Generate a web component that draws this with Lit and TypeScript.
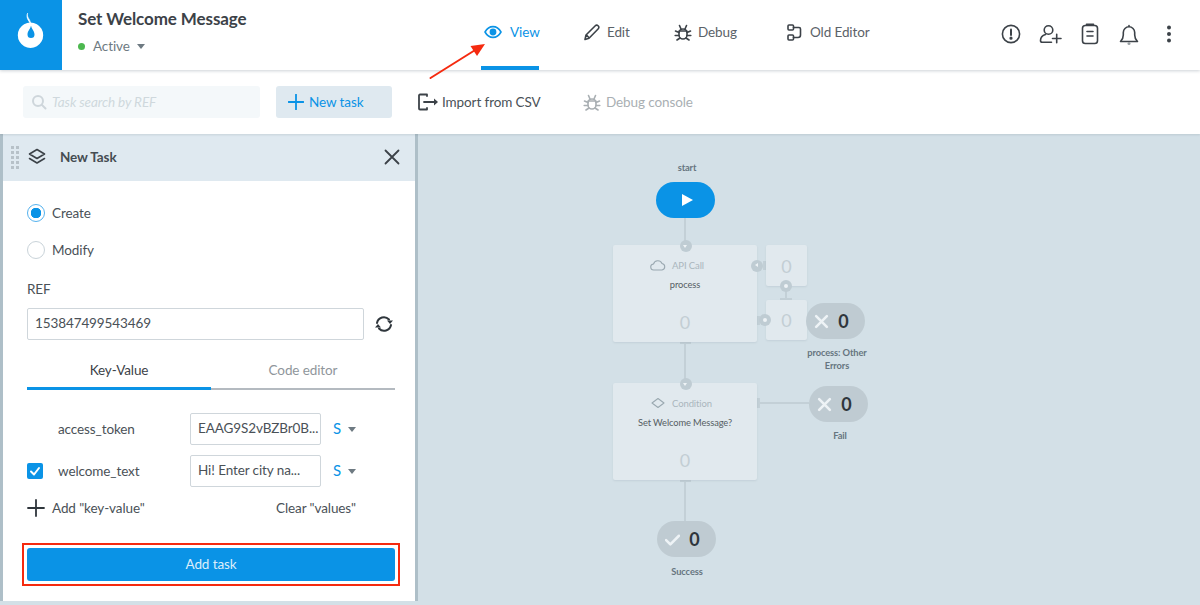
import { LitElement, html, css, svg } from "lit";
import { customElement } from "lit/decorators.js";

const ORIGIN_X = 418;
const ORIGIN_Y = 134;

const place = (x: number, y: number, w?: number, h?: number) =>
  `left:${x - ORIGIN_X}px;top:${y - ORIGIN_Y}px;` +
  (w !== undefined ? `width:${w}px;` : "") +
  (h !== undefined ? `height:${h}px;` : "");

const bug = svg`<path d="M5 10a4 4 0 0 1 8 0v2a4 4 0 0 1-8 0Z" /><path d="M5.200 8h7.600M5.500 2.500 7 6M12.500 2.500 11 6M5 9.500 1.500 8M13 9.500l3.500-1.500M5 12.500H1.200M13 12.500h3.800M6 15l-3 2M12 15l3 2" />`;

const icons = {
  eye: svg`<path d="M1 9c2-3.600 5-5.400 8-5.400s6 1.800 8 5.400c-2 3.600-5 5.400-8 5.400S3 12.600 1 9Z" /><circle cx="9" cy="9" r="2.600" fill="currentColor" />`,
  pencil: svg`<path d="M2 16.500 3 12 12.300 2.700a1.900 1.900 0 0 1 2.700 0l.3.300a1.900 1.900 0 0 1 0 2.700L6 15.200 2 16.500ZM3.500 12 6 14.800" />`,
  bug,
  editor: svg`<rect x="2" y="2" width="5.500" height="5" rx="1" /><rect x="2" y="12" width="5.500" height="5" rx="1" /><path d="M7.500 4.500H13a1.500 1.500 0 0 1 1.500 1.500v6a2.500 2.500 0 0 1-2.500 2.500H7.500" />`,
};

const topIcons = [
  svg`<circle cx="12" cy="12" r="8.600" /><path d="M12 7.500v5.500" stroke-width="2" /><circle cx="12" cy="16.200" r=".8" fill="currentColor" />`,
  svg`<circle cx="10.500" cy="8" r="4.300" /><path d="M7.500 12.500c-2.700.8-5 2.700-5 6 0 1 .8 1.800 1.800 1.800h9.200M14.500 16.500H23M18.700 12.300v8.400" />`,
  svg`<rect x="4.500" y="3.500" width="15" height="18" rx="2.800" /><path d="M8.500 2.400h7M9 9.500h6M9 14h6" />`,
  svg`<path d="M3.500 19.500c1.800-1.700 2.800-3 2.800-6.500v-2.500a5.700 5.700 0 0 1 11.400 0V13c0 3.500 1 4.800 2.800 6.500H3.500ZM12 4.800V3.500" /><circle cx="12" cy="21.600" r="1.500" fill="#9aa0a5" stroke="none" />`,
  svg`<circle cx="12" cy="5.500" r="2" fill="currentColor" stroke="none" /><circle cx="12" cy="12" r="2" fill="currentColor" stroke="none" /><circle cx="12" cy="18.500" r="2" fill="currentColor" stroke="none" />`,
];

@customElement("app-root")
export class AppRoot extends LitElement {
  static styles = css`
    * {
      box-sizing: border-box;
    }

    :host {
      display: block;
      width: 1200px;
      height: 605px;
      overflow: hidden;
      position: relative;
      background: #d3e0e7;
      font-family: "Lato", "Open Sans", sans-serif;
      font-size: 13.500px;
      letter-spacing: -0.1px;
      color: #4a5157;
    }

    svg {
      display: block;
      fill: none;
      stroke: currentColor;
      stroke-width: 1.600;
      stroke-linecap: round;
      stroke-linejoin: round;
      flex: none;
    }

    .header {
      display: flex;
      height: 70px;
      background: #fff;
      box-shadow: 0 1px 3px rgba(60, 80, 95, 0.25);
      position: relative;
      z-index: 2;
    }

    .logo {
      width: 62px;
      background: #0a93e6;
      flex: none;
    }

    .logo svg {
      stroke: #fff;
      fill: #fff;
      stroke-width: 0;
    }

    .title-block {
      width: 403px;
      margin-left: 16px;
      flex: none;
    }

    .title {
      margin-top: 9px;
      font-size: 17px;
      line-height: 19px;
      font-weight: 700;
      color: #3c4248;
    }

    .status {
      display: flex;
      align-items: center;
      margin-top: 10px;
      line-height: 16px;
      color: #6e7a82;
    }

    .dot {
      width: 7px;
      height: 7px;
      border-radius: 50%;
      background: #4cb84f;
      margin-right: 8px;
    }

    .caret {
      width: 0;
      height: 0;
      border-left: 4.500px solid transparent;
      border-right: 4.500px solid transparent;
      border-top: 5px solid #6e7a82;
      flex: none;
    }

    .status .caret {
      margin-left: 7px;
    }

    .tabs {
      display: grid;
      grid-template-columns: 58px 47px 63px 83px;
      column-gap: 44px;
      width: 480px;
      flex: none;
    }

    .tab {
      display: flex;
      align-items: center;
      gap: 6px;
      height: 70px;
      padding: 0 0 6px 0;
      white-space: nowrap;
      color: #5b6268;
    }

    .tab svg {
      color: #3c4248;
    }

    .tab.active {
      gap: 8px;
      color: #0a93e6;
      border-bottom: 4px solid #0a93e6;
      padding: 0 0 2px 3px;
    }

    .tab.active svg {
      color: #0a93e6;
    }

    .tab.old {
      margin-left: 5px;
    }

    .actions {
      display: flex;
      margin-left: 30px;
      padding-bottom: 2px;
    }

    .action {
      width: 39.500px;
      display: flex;
      align-items: center;
      justify-content: center;
      color: #3c4248;
    }

    .toolbar {
      display: flex;
      align-items: center;
      height: 64px;
      padding-left: 23px;
      background: #fff;
      position: relative;
      z-index: 1;
      box-shadow: 0 1px 2px rgba(60, 80, 95, 0.15);
    }

    .search {
      display: flex;
      align-items: center;
      gap: 5px;
      width: 237px;
      height: 32px;
      padding-left: 8px;
      border-radius: 3px;
      background: #f4f8fa;
      color: #cfd8dd;
      font-style: italic;
    }

    .new-task {
      display: flex;
      align-items: center;
      gap: 5px;
      width: 116px;
      height: 32px;
      margin-left: 16px;
      padding-left: 12px;
      border-radius: 3px;
      background: #dfe9f0;
      color: #0a93e6;
    }

    .tool {
      display: flex;
      align-items: center;
      white-space: nowrap;
      gap: 4px;
      color: #4a5157;
    }

    .tool.import {
      width: 165px;
      margin-left: 26px;
    }

    .tool.debug {
      gap: 5px;
      color: #a9afb3;
    }

    .main {
      display: flex;
      height: 471px;
    }

    .panel {
      width: 418px;
      height: 467px;
      flex: none;
      border-left: 3px solid #aebfc8;
      border-right: 3px solid #aebfc8;
      background: #fff;
      box-shadow: 0 4px 0 #d3e0e7;
    }

    .panel-head {
      display: flex;
      align-items: center;
      height: 47px;
      padding: 0 15px 1px 8px;
      background: #dfe9f0;
      font-weight: 700;
      color: #454c52;
    }

    .grip {
      display: grid;
      grid-template-columns: 3px 3px;
      gap: 2px 2px;
      width: 8px;
      margin-right: 9px;
    }

    .grip i {
      width: 3px;
      height: 3px;
      background: #b7c1c8;
    }

    .panel-head .name {
      margin-left: 14px;
      flex: 1;
    }

    .panel-body {
      padding: 0 20px 0 24px;
    }

    .radio {
      display: flex;
      align-items: center;
      gap: 7px;
      height: 18px;
    }

    .radio.first {
      margin-top: 23px;
    }

    .radio.second {
      margin-top: 19px;
    }

    .radio i {
      width: 18px;
      height: 18px;
      border-radius: 50%;
      border: 1px solid #c9d3d9;
      flex: none;
    }

    .radio.on i {
      border-color: #55b2ee;
      background: radial-gradient(circle, #0a93e6 0 5px, #fff 5.500px);
    }

    .ref-label {
      margin-top: 22px;
      line-height: 17px;
    }

    .ref {
      display: flex;
      align-items: center;
      margin-top: 10px;
    }

    .field {
      height: 32px;
      line-height: 28px;
      padding: 0 3px 0 7px;
      border: 1px solid #cfd6db;
      border-radius: 2px;
      background: #fff;
      white-space: nowrap;
      overflow: hidden;
      color: #4a5157;
    }

    .ref .field {
      width: 337px;
    }

    .ref svg {
      margin-left: 10px;
    }

    .kv-tabs {
      display: grid;
      grid-template-columns: 184px 184px;
      margin-top: 20px;
      text-align: center;
    }

    .kv-tab {
      height: 30px;
      line-height: 20px;
      border-bottom: 2px solid #b4bac0;
      color: #8f969b;
    }

    .kv-tab.active {
      border-bottom: 3px solid #0a93e6;
      color: #3c4248;
    }

    .kv-row {
      display: flex;
      align-items: center;
      height: 32px;
    }

    .kv-row.one {
      margin-top: 23px;
    }

    .kv-row.two {
      margin-top: 10px;
    }

    .check {
      width: 31px;
      flex: none;
    }

    .check i {
      display: flex;
      align-items: center;
      justify-content: center;
      width: 16px;
      height: 16px;
      border-radius: 2px;
      background: #0a93e6;
      color: #fff;
    }

    .kv-row .key {
      width: 132px;
      flex: none;
    }

    .kv-row .field {
      width: 131px;
      flex: none;
    }

    .type {
      margin-left: 12px;
      width: 15px;
      font-size: 15px;
      line-height: 15px;
      padding-bottom: 2px;
      color: #0a93e6;
    }

    .add-row {
      display: flex;
      align-items: center;
      margin-top: 12px;
      height: 18px;
      color: #4a5157;
      white-space: nowrap;
    }

    .add-row svg {
      margin-right: 7px;
    }

    .add-row .clear {
      margin-left: auto;
      margin-right: 39px;
    }

    .add-box {
      margin: 26px -5px 0 -5px;
      border: 2px solid #f52a0f;
      padding: 3px;
      height: 43px;
    }

    .add-btn {
      height: 33px;
      line-height: 33px;
      text-align: center;
      border-radius: 3px;
      background: #0a93e6;
      color: #dceefb;
    }

    .canvas {
      position: relative;
      flex: 1;
      background: #d3e0e7;
    }

    .line,
    .node,
    .pill,
    .label,
    .knob {
      position: absolute;
    }

    .line {
      background: #c3d0d7;
    }

    .node {
      background: #e1e9ee;
      border-radius: 2px;
      box-shadow: 0 1px 2px rgba(80, 100, 115, 0.12);
      text-align: center;
      color: #c3ced4;
      font-size: 18px;
    }

    .node .kind {
      display: flex;
      align-items: center;
      gap: 6px;
      margin-top: 12px;
      padding-left: 37px;
      height: 16px;
      font-size: 9.500px;
      color: #aab6bd;
    }

    .node .kind svg {
      color: #9aa8b0;
      stroke-width: 1.100;
    }

    .node .text {
      margin-top: 4px;
      height: 16px;
      line-height: 16px;
      font-size: 9.300px;
      color: #555d63;
    }

    .node .count {
      margin-top: 17px;
      line-height: 24px;
    }

    .node.small {
      display: flex;
      align-items: center;
      justify-content: center;
    }

    .knob {
      width: 12px;
      height: 12px;
      border-radius: 50%;
      background: #bfccd3;
    }

    .knob::after {
      content: "";
      position: absolute;
      left: 4px;
      top: 4px;
      width: 4px;
      height: 4px;
      border-radius: 50%;
      background: #eef3f6;
    }

    .knob.down::after {
      top: 5px;
      left: 3.500px;
      width: 0;
      height: 0;
      border-radius: 0;
      background: none;
      border-left: 2.500px solid transparent;
      border-right: 2.500px solid transparent;
      border-top: 3px solid #eef3f6;
    }

    .knob.left::after {
      top: 3.500px;
      left: 4px;
      width: 0;
      height: 0;
      border-radius: 0;
      background: none;
      border-top: 2.500px solid transparent;
      border-bottom: 2.500px solid transparent;
      border-right: 3px solid #eef3f6;
    }

    .pill {
      display: flex;
      align-items: center;
      justify-content: center;
      gap: 9px;
      width: 59px;
      height: 36px;
      padding-right: 8px;
      border-radius: 18px;
      background: #bfcbd2;
      color: #2f363c;
      font-size: 18px;
      font-weight: 700;
    }

    .pill svg {
      color: #eef3f6;
      stroke-width: 2.400;
    }

    .pill.start {
      padding: 0 0 0 3px;
      background: #0a93e6;
    }

    .pill.start svg {
      fill: #fff;
      stroke: none;
    }

    .label {
      width: 80px;
      text-align: center;
      font-size: 9.300px;
      line-height: 13px;
      font-weight: 700;
      color: #66757f;
    }

    .arrow {
      position: absolute;
      left: 425px;
      top: 40px;
      z-index: 3;
      stroke: #f52a0f;
    }
  `;

  private tab(name: string, icon: unknown, cls = "") {
    return html`<div class="tab ${cls}">
      <svg width="18" height="18" viewBox="0 0 18 18">${icon}</svg>${name}
    </div>`;
  }

  private node(x: number, y: number, kind: unknown, label: string, text: string) {
    return html`<div class="node" style=${place(x, y, 144, 97)}>
      <div class="kind">
        <svg width="16" height="14" viewBox="0 0 16 14">${kind}</svg>${label}
      </div>
      <div class="text">${text}</div>
      <div class="count">0</div>
    </div>`;
  }

  private pill(x: number, y: number, icon: unknown) {
    return html`<div class="pill" style=${place(x, y)}>
      <svg width="15" height="15" viewBox="0 0 14 14">${icon}</svg>0
    </div>`;
  }

  private label(cx: number, y: number, text: unknown) {
    return html`<div class="label" style=${place(cx - 40, y)}>${text}</div>`;
  }

  private knob(cx: number, cy: number, cls = "") {
    return html`<div class="knob ${cls}" style=${place(cx - 6, cy - 6)}></div>`;
  }

  private line(x: number, y: number, w: number, h: number) {
    return html`<div class="line" style=${place(x, y, w, h)}></div>`;
  }

  render() {
    const cross = svg`<path d="M2 2l10 10M12 2 2 12" />`;
    const check = svg`<path d="M1 7.500 5 11.500 13 3.500" />`;
    const cloud = svg`<path d="M4 12a3 3 0 0 1-.5-6 4.500 4.500 0 0 1 8.500-.5 3.300 3.300 0 0 1 0 6.500H4Z" />`;
    const diamond = svg`<path d="M8 2.500 14 7 8 11.500 2 7Z" />`;

    return html`
      <div class="header">
        <div class="logo">
          <svg width="62" height="70" viewBox="0 0 62 70">
            <path
              fill-rule="evenodd"
              d="M30.500 22.500a12.700 12.700 0 1 1-.01 0ZM31 25.500c-.6 3.500-3.500 5.500-3.500 9a3.500 3.500 0 0 0 7 0c0-3.500-2.900-5.500-3.500-9Z"
            />
            <path
              d="M27.500 13.500c-1.500 4 3.600 5.500 3.500 12.500-.8-5-5.800-7-3.500-12.500Z"
              stroke-width=".6"
            />
          </svg>
        </div>
        <div class="title-block">
          <div class="title">Set Welcome Message</div>
          <div class="status">
            <span class="dot"></span>Active<span class="caret"></span>
          </div>
        </div>
        <div class="tabs">
          ${this.tab("View", icons.eye, "active")}
          ${this.tab("Edit", icons.pencil)}
          ${this.tab("Debug", icons.bug)}
          ${this.tab("Old Editor", icons.editor, "old")}
        </div>
        <div class="actions">
          ${topIcons.map(
            (icon) => html`<div class="action">
              <svg width="24" height="24" viewBox="0 0 24 24">${icon}</svg>
            </div>`
          )}
        </div>
      </div>

      <svg class="arrow" width="66" height="44" viewBox="425 40 66 44">
        <path d="M430.500 78 476 49.500" stroke-width="2" />
        <path d="M485 44 470.500 46 477 56Z" fill="#f52a0f" stroke="none" />
      </svg>

      <div class="toolbar">
        <div class="search">
          <svg width="16" height="16" viewBox="0 0 16 16" style="color:#ced6db">
            <circle cx="7" cy="7" r="5" stroke-width="2" />
            <path d="m11 11 3.500 3.500" stroke-width="2" />
          </svg>
          Task search by REF
        </div>
        <div class="new-task">
          <svg width="16" height="16" viewBox="0 0 16 16">
            <path d="M8 .5v15M.5 8h15" stroke-width="1.800" />
          </svg>
          New task
        </div>
        <div class="tool import">
          <svg width="20" height="18" viewBox="0 0 20 18" style="color:#3c4248">
            <path d="M9 3V1.500H2A1 1 0 0 0 1 2.500v13a1 1 0 0 0 1 1h7V15M6 9h11" stroke-width="1.800" />
            <path d="M16 5.500 20 9l-4 3.500Z" fill="currentColor" stroke="none" />
          </svg>
          Import from CSV
        </div>
        <div class="tool debug">
          <svg width="18" height="18" viewBox="0 0 18 18">${icons.bug}</svg>
          Debug console
        </div>
      </div>

      <div class="main">
        <div class="panel">
          <div class="panel-head">
            <div class="grip">
              ${Array.from({ length: 10 }, () => html`<i></i>`)}
            </div>
            <svg width="18" height="18" viewBox="0 0 18 18" style="color:#3c4248">
              <path d="M9 1.500 16.500 6 9 10.500 1.500 6ZM1.500 10.500 9 15l7.500-4.500" />
            </svg>
            <span class="name">New Task</span>
            <svg width="16" height="16" viewBox="0 0 16 16" style="color:#3c4248">
              <path d="M1.500 1.500l13 13M14.500 1.500l-13 13" stroke-width="1.800" />
            </svg>
          </div>
          <div class="panel-body">
            <div class="radio first on"><i></i>Create</div>
            <div class="radio second"><i></i>Modify</div>
            <div class="ref-label">REF</div>
            <div class="ref">
              <div class="field">153847499543469</div>
              <svg width="20" height="20" viewBox="0 0 20 20" style="color:#2f363c">
                <path d="M3 9a7 7 0 0 1 12-3.500M17 11a7 7 0 0 1-12 3.500" stroke-width="2" />
                <path d="M13 6.500h6L16 10ZM7 13.500H1L4 10Z" fill="currentColor" stroke="none" />
              </svg>
            </div>
            <div class="kv-tabs">
              <div class="kv-tab active">Key-Value</div>
              <div class="kv-tab">Code editor</div>
            </div>
            <div class="kv-row one">
              <div class="check"></div>
              <div class="key">access_token</div>
              <div class="field">EAAG9S2vBZBr0B...</div>
              <div class="type">S</div>
              <span class="caret"></span>
            </div>
            <div class="kv-row two">
              <div class="check">
                <i>
                  <svg width="12" height="12" viewBox="0 0 12 12">
                    <path d="M2 6.500 5 9.500 10 3" stroke-width="2" />
                  </svg>
                </i>
              </div>
              <div class="key">welcome_text</div>
              <div class="field">Hi! Enter city na...</div>
              <div class="type">S</div>
              <span class="caret"></span>
            </div>
            <div class="add-row">
              <svg width="18" height="18" viewBox="0 0 18 18" style="color:#2f363c">
                <path d="M9 1v16M1 9h16" stroke-width="1.800" />
              </svg>
              Add "key-value"
              <span class="clear">Clear "values"</span>
            </div>
            <div class="add-box">
              <div class="add-btn">Add task</div>
            </div>
          </div>
        </div>

        <div class="canvas">
          ${this.line(684, 217, 2, 28)} ${this.line(684, 342, 2, 42)}
          ${this.line(684, 480, 2, 42)} ${this.line(757, 402, 52, 2)}
          ${this.line(785, 286, 2, 14)}
          ${this.line(680, 342, 11, 2)} ${this.line(680, 480, 11, 2)}
          ${this.line(757, 398, 3, 10)} ${this.line(780, 298, 12, 2)}
          ${this.line(763, 261, 3, 9)} ${this.line(757, 316, 3, 9)}
          ${this.label(687, 161, "start")}
          <div class="pill start" style=${place(656, 182)}>
            <svg width="14" height="14" viewBox="0 0 14 14">
              <path d="M2 1l11 6-11 6Z" />
            </svg>
          </div>
          ${this.node(613, 245, cloud, "API Call", "process")}
          <div class="node small" style=${place(766, 245, 41, 41)}>0</div>
          <div class="node small" style=${place(766, 300, 41, 40)}>0</div>
          ${this.node(613, 383, diamond, "Condition", "Set Welcome Message?")}
          ${this.knob(685.5, 245.5, "down")} ${this.knob(757, 265.5, "left")}
          ${this.knob(786, 286)} ${this.knob(765, 320)}
          ${this.knob(685.5, 383.5, "down")}
          ${this.pill(806, 303, cross)} ${this.pill(809, 386, cross)}
          ${this.pill(657, 521, check)}
          ${this.label(837, 346, html`process: Other<br />Errors`)}
          ${this.label(840, 429, "Fail")} ${this.label(687, 565, "Success")}
        </div>
      </div>
    `;
  }
}
